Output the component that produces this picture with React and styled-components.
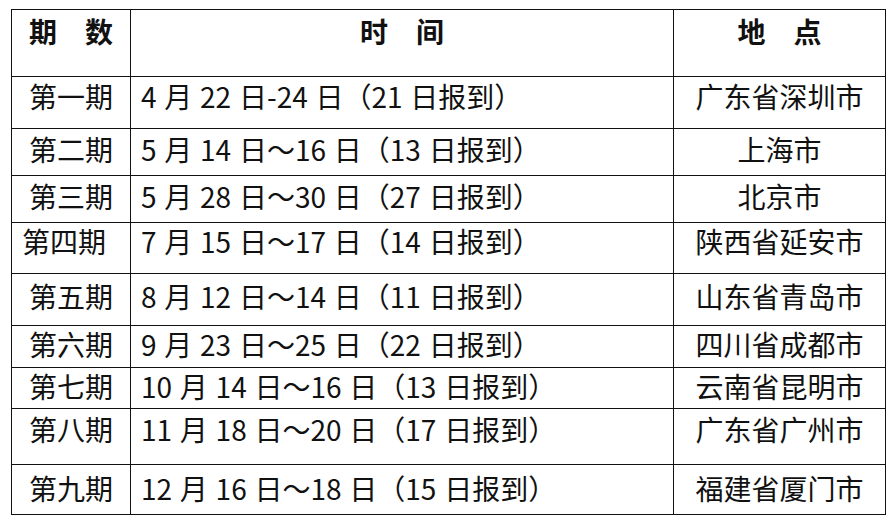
import React from 'react';
import styled, { createGlobalStyle } from 'styled-components';

const Global = createGlobalStyle`
  html, body { margin: 0; padding: 0; background: #fff; }
  body { font-family: "Noto Sans CJK SC", "Noto Sans", sans-serif; color: #111; }
`;

const Page = styled.div`
  width: 893px;
  height: 525px;
  overflow: hidden;
  padding-left: 11px;
  box-sizing: border-box;
`;

const TitleBar = styled.div`
  height: 9px;
  overflow: hidden;
  display: flex;
  align-items: flex-end;
  padding: 0 0 9px 122px;
  box-sizing: border-box;
`;

const Title = styled.span`
  font-size: 28px;
  font-weight: 700;
  line-height: 1;
  white-space: nowrap;
  transform: translateY(-1px);
`;

const Table = styled.div`
  display: grid;
  grid-template-columns: 119px 543px 212px;
  grid-template-rows: ${p => p.$rows};
  border-top: 1px solid #111;
  border-left: 1px solid #111;
  width: max-content;
`;

const Cell = styled.div`
  box-sizing: border-box;
  border-right: 1px solid #111;
  border-bottom: 1px solid #111;
  font-size: 28px;
  line-height: 36px;
  font-weight: ${p => (p.$head ? 700 : 400)};
  text-align: ${p => p.$align || 'center'};
  word-spacing: ${p => (p.$align === 'left' ? 1.5 : 0)}px;
  padding-top: ${p => p.$pad}px;
  padding-left: ${p => (p.$align === 'left' ? 10 : 0)}px;
  padding-right: ${p => p.$shift || 0}px;
  white-space: nowrap;
  overflow: hidden;
`;

const header = { h: 67, pad: 3 };

const rows = [
  { no: '第一期', time: '4 月 22 日-24 日（21 日报到）', place: '广东省深圳市', h: 52, pad: 1 },
  { no: '第二期', time: '5 月 14 日～16 日（13 日报到）', place: '上海市', h: 47, pad: 2 },
  { no: '第三期', time: '5 月 28 日～30 日（27 日报到）', place: '北京市', h: 47, pad: 2 },
  { no: '第四期', time: '7 月 15 日～17 日（14 日报到）', place: '陕西省延安市', h: 51, pad: 0, shift: 14 },
  { no: '第五期', time: '8 月 12 日～14 日（11 日报到）', place: '山东省青岛市', h: 52, pad: 4 },
  { no: '第六期', time: '9 月 23 日～25 日（22 日报到）', place: '四川省成都市', h: 42, pad: 0 },
  { no: '第七期', time: '10 月 14 日～16 日（13 日报到）', place: '云南省昆明市', h: 41, pad: 0 },
  { no: '第八期', time: '11 月 18 日～20 日（17 日报到）', place: '广东省广州市', h: 56, pad: 2 },
  { no: '第九期', time: '12 月 16 日～18 日（15 日报到）', place: '福建省厦门市', h: 50, pad: 5 },
];

export default function App() {
  const template = [header.h, ...rows.map(r => r.h)].map(h => `${h}px`).join(' ');
  return (
    <Page>
      <Global />
      <TitleBar>
        <Title>培训班时间地点安排</Title>
      </TitleBar>
      <Table $rows={template}>
        <Cell $head $pad={header.pad}>期　数</Cell>
        <Cell $head $pad={header.pad}>时　间</Cell>
        <Cell $head $pad={header.pad}>地　点</Cell>
        {rows.map(r => (
          <React.Fragment key={r.no}>
            <Cell $pad={r.pad} $shift={r.shift}>{r.no}</Cell>
            <Cell $pad={r.pad} $align="left">{r.time}</Cell>
            <Cell $pad={r.pad}>{r.place}</Cell>
          </React.Fragment>
        ))}
      </Table>
    </Page>
  );
}
